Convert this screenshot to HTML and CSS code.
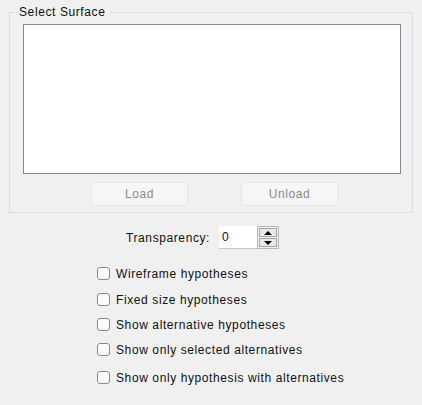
FILE: index.html
```html
<!DOCTYPE html>
<html>
<head>
<meta charset="utf-8">
<link rel="stylesheet" href="styles.css">
</head>
<body>
<div class="panel">
  <div class="group">
    <span class="group-title">Select Surface</span>
    <div class="listbox"></div>
    <div class="button-row">
      <button class="btn" disabled>Load</button>
      <button class="btn" disabled>Unload</button>
    </div>
  </div>
  <div class="transparency-row">
    <span class="label">Transparency:</span>
    <div class="spin">
      <div class="spin-input">0</div>
      <div class="spin-buttons">
        <div class="spin-btn"><span class="arrow-up"></span></div>
        <div class="spin-btn"><span class="arrow-down"></span></div>
      </div>
    </div>
  </div>
  <div class="checks">
    <label class="check-row"><span class="box"></span><span class="check-text">Wireframe hypotheses</span></label>
    <label class="check-row gap-13"><span class="box"></span><span class="check-text">Fixed size hypotheses</span></label>
    <label class="check-row"><span class="box"></span><span class="check-text">Show alternative hypotheses</span></label>
    <label class="check-row"><span class="box"></span><span class="check-text">Show only selected alternatives</span></label>
    <label class="check-row gap-15"><span class="box"></span><span class="check-text">Show only hypothesis with alternatives</span></label>
  </div>
</div>
</body>
</html>
```
FILE: styles.css
```css
html, body {
  margin: 0;
  padding: 0;
  background: #f0f0f0;
}
body {
  font-family: "Liberation Sans", Arial, sans-serif;
  font-size: 12px;
  letter-spacing: 0.6px;
  color: #111;
  width: 422px;
  height: 405px;
  overflow: hidden;
}
.panel {
  display: flex;
  flex-direction: column;
  padding-top: 12px;
}
.group {
  position: relative;
  margin-left: 9px;
  width: 404px;
  height: 201px;
  box-sizing: border-box;
  border: 1px solid #dcdcdc;
  padding: 11px 0 0 13px;
  display: flex;
  flex-direction: column;
}
.group-title {
  position: absolute;
  left: 5px;
  top: -8px;
  padding: 0 5px 0 4px;
  line-height: 14px;
  background: #f0f0f0;
}
.listbox {
  width: 378px;
  height: 150px;
  box-sizing: border-box;
  background: #fff;
  border: 1px solid #828790;
}
.button-row {
  display: flex;
  gap: 53px;
  margin-top: 8px;
  padding-left: 68px;
}
.btn {
  width: 97px;
  height: 24px;
  box-sizing: border-box;
  border: 1px solid #e6e6e6;
  border-radius: 3px;
  background: #f6f6f6;
  color: #8a8a8a;
  font-family: inherit;
  font-size: 12px;
  letter-spacing: 0.6px;
  padding: 0;
}
.transparency-row {
  display: flex;
  align-items: center;
  margin-top: 13px;
  padding-left: 126px;
  height: 23px;
}
.label {
  width: 93px;
}
.spin {
  display: flex;
  height: 23px;
}
.spin-input {
  width: 38px;
  box-sizing: border-box;
  background: #fff;
  border-bottom: 1px solid #c8c8c8;
  padding-left: 3px;
  line-height: 23px;
}
.spin-buttons {
  width: 22px;
  box-sizing: border-box;
  border: 1px solid #b8b8b8;
  padding: 1px;
  display: flex;
  flex-direction: column;
  gap: 1px;
  background: #f0f0f0;
}
.spin-btn {
  flex: 1;
  border: 1px solid #a6a6a6;
  background: #e8e8e8;
  display: flex;
  align-items: center;
  justify-content: center;
}
.arrow-up {
  width: 0;
  height: 0;
  border-left: 4px solid transparent;
  border-right: 4px solid transparent;
  border-bottom: 4px solid #000;
}
.arrow-down {
  width: 0;
  height: 0;
  border-left: 4px solid transparent;
  border-right: 4px solid transparent;
  border-top: 4px solid #000;
}
.checks {
  display: flex;
  flex-direction: column;
  margin-top: 18px;
  padding-left: 97px;
}
.check-row {
  display: flex;
  align-items: center;
  height: 13px;
  margin-top: 12px;
}
.check-row:first-child {
  margin-top: 0;
}
.check-row.gap-13 {
  margin-top: 13px;
}
.check-row.gap-15 {
  margin-top: 15px;
}
.box {
  width: 13px;
  height: 13px;
  box-sizing: border-box;
  border: 1px solid #8a8a8a;
  border-radius: 3px;
  background: #fdfdfd;
  flex: none;
}
.check-text {
  margin-left: 6px;
  line-height: 14px;
}
```
